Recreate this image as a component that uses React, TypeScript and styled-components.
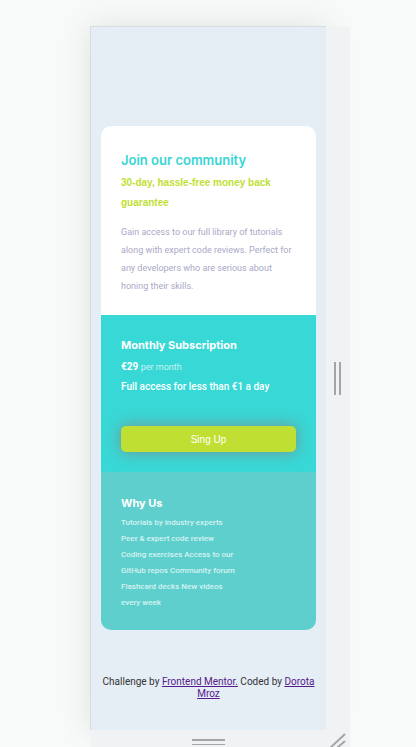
import React from 'react';
import styled, { createGlobalStyle } from 'styled-components';

const GlobalStyle = createGlobalStyle`
  *, *::before, *::after { box-sizing: border-box; }
  body {
    margin: 0;
    background: #f8faf9;
    font-family: Roboto, "Liberation Sans", sans-serif;
  }
  h1, h2, p, ul { margin: 0; padding: 0; }
`;

const Stage = styled.div`
  display: grid;
  grid-template-columns: minmax(0, 1fr) 24px;
  grid-template-rows: 1fr 17px;
  min-height: 100vh;
  padding: 26px 66px 0 90px;
  overflow: hidden;
`;

const Viewport = styled.div`
  display: flex;
  flex-direction: column;
  padding: 99px 10px 28px;
  border: solid #d9dddd;
  border-width: 1px 0 0 1px;
  background: #e5edf5;
  box-shadow: 0 0 30px rgba(0, 0, 0, 0.1);
`;

const SideRail = styled.div`
  position: relative;
  display: flex;
  align-items: center;
  justify-content: center;
  margin-top: 1px;
  padding-right: 1px;
  background: #f1f2f4;
`;

const BottomRail = styled.div`
  position: relative;
  grid-column: 1 / -1;
  display: grid;
  grid-template-columns: minmax(0, 1fr) 24px;
  justify-items: center;
  margin-left: 1px;
  background: #f1f2f4;
  overflow: hidden;
`;

const Grip = styled.svg`
  display: block;
  fill: none;
  stroke: #a5a5a5;
`;

const BottomGrip = styled(Grip)`
  margin-top: 8px;
`;

const CornerGrip = styled(Grip)`
  margin-top: 3px;
`;

const Card = styled.main`
  border-radius: 10px;
  overflow: hidden;
`;

const Section = styled.section<{ $tone: string }>`
  padding: 20px;
  background: ${({ $tone }) => $tone};
  color: #fff;
`;

const Intro = styled(Section)`
  padding-top: 24px;
`;

const WhyUs = styled(Section)`
  padding: 21px 20px 19px;
`;

const Title = styled.h1`
  margin-bottom: 3px;
  color: #38d5d5;
  font-family: Inter, sans-serif;
  font-size: 13px;
  font-weight: 600;
  line-height: 20px;
`;

const Guarantee = styled.p`
  margin-bottom: 10px;
  color: #bfdf32;
  font-family: "Liberation Sans", Arial, sans-serif;
  font-size: 10px;
  font-weight: 700;
  line-height: 20px;
  white-space: nowrap;
`;

const Description = styled.p`
  color: #a9a9c6;
  font-size: 9px;
  line-height: 18px;
  white-space: nowrap;
`;

const Heading = styled.h2`
  margin-bottom: 2px;
  font-family: Inter, sans-serif;
  font-size: 11px;
  font-weight: 700;
  line-height: 20px;
`;

const Price = styled.p`
  font-size: 10px;
  font-weight: 700;
  line-height: 20px;
`;

const Period = styled.span`
  color: #c8f3f3;
  font-size: 9px;
  font-weight: 400;
  line-height: 1;
`;

const Pitch = styled.p`
  margin-bottom: 29px;
  font-size: 10px;
  font-weight: 500;
  line-height: 20px;
`;

const SignUp = styled.button`
  display: block;
  width: 100%;
  height: 26px;
  padding: 0;
  border: 0;
  border-radius: 5px;
  background: #bfdf32;
  box-shadow: 0 0 15px #788f8f;
  color: #fff;
  font-family: "Liberation Sans", Arial, sans-serif;
  font-size: 10px;
`;

const Reasons = styled.ul`
  list-style: none;
  color: #d5f3f2;
  font-size: 8px;
  font-weight: 500;
  line-height: 16px;
`;

const Attribution = styled.footer`
  margin-top: 46px;
  color: #333;
  font-size: 10px;
  line-height: 12px;
  text-align: center;
  white-space: nowrap;
`;

const Credit = styled.a`
  color: #551a8b;
`;

const reasons = [
  'Tutorials by industry experts',
  'Peer & expert code review',
  'Coding exercises Access to our',
  'GitHub repos Community forum',
  'Flashcard decks New videos',
  'every week',
];

export default function App() {
  return (
    <>
      <GlobalStyle />
      <Stage>
        <Viewport>
          <Card>
            <Intro $tone="#ffffff">
              <Title>Join our community</Title>
              <Guarantee>
                30-day, hassle-free money back
                <br />
                guarantee
              </Guarantee>
              <Description>
                Gain access to our full library of tutorials
                <br />
                along with expert code reviews. Perfect for
                <br />
                any developers who are serious about
                <br />
                honing their skills.
              </Description>
            </Intro>
            <Section $tone="#38d8d6">
              <Heading>Monthly Subscription</Heading>
              <Price>
                €29 <Period>per month</Period>
              </Price>
              <Pitch>Full access for less than €1 a day</Pitch>
              <SignUp type="button">Sing Up</SignUp>
            </Section>
            <WhyUs $tone="#5fcfcd">
              <Heading>Why Us</Heading>
              <Reasons>
                {reasons.map((reason) => (
                  <li key={reason}>{reason}</li>
                ))}
              </Reasons>
            </WhyUs>
          </Card>
          <Attribution>
            Challenge by <Credit href="#frontend-mentor">Frontend Mentor.</Credit> Coded by{' '}
            <Credit href="#author">
              Dorota
              <br />
              Mroz
            </Credit>
          </Attribution>
        </Viewport>
        <SideRail>
          <Grip width="8" height="33" viewBox="0 0 8 33" aria-hidden="true">
            <path d="M1 0v33M6 0v33" strokeWidth="2" />
          </Grip>
        </SideRail>
        <BottomRail>
          <BottomGrip width="33" height="8" viewBox="0 0 33 8" aria-hidden="true">
            <path d="M0 2h33" strokeWidth="2" />
            <path d="M0 6.5h33" strokeWidth="1" />
          </BottomGrip>
          <CornerGrip width="16" height="16" viewBox="0 0 16 16" strokeWidth="2" aria-hidden="true">
            <path d="M0 15L15 1M7 15L15 8" />
          </CornerGrip>
        </BottomRail>
      </Stage>
    </>
  );
}
